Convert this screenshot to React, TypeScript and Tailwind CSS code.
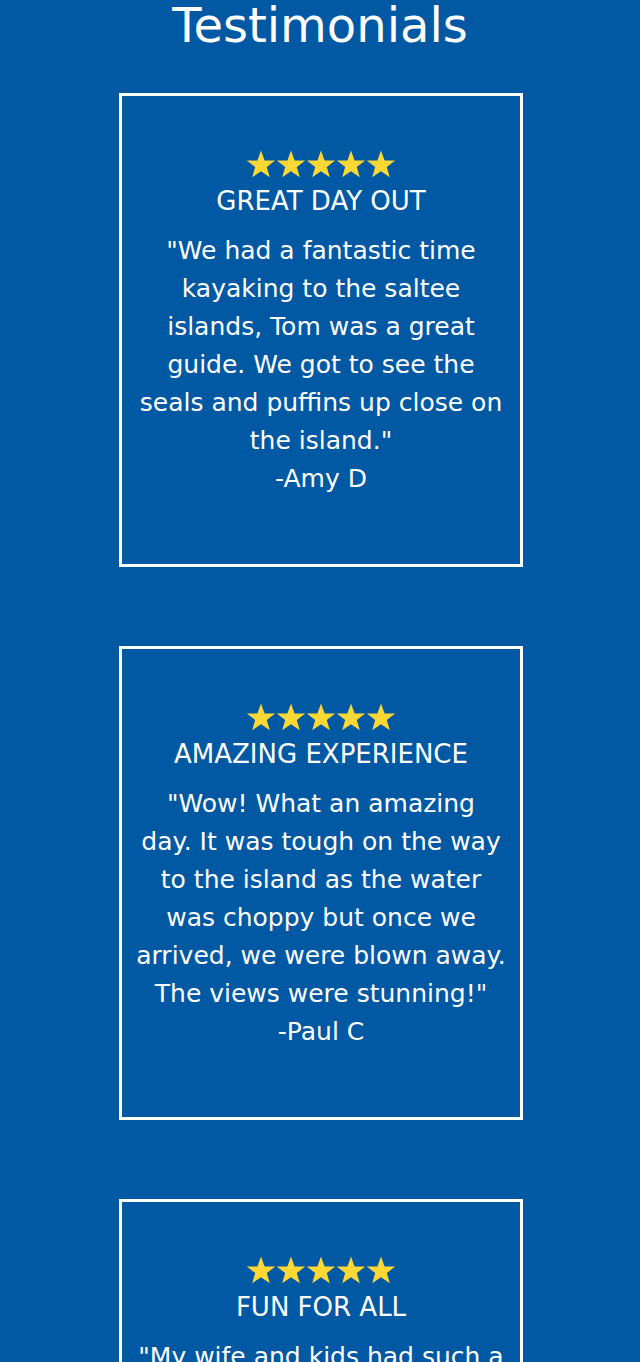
import React from "react";

const Star = () => (
  <svg width="30" height="28" viewBox="0 0 30 28" className="block">
    <polygon
      points="15,0.5 18.6,10.4 29.2,10.6 20.8,17.1 23.8,27.3 15,21.3 6.2,27.3 9.2,17.1 0.8,10.6 11.4,10.4"
      fill="#fdd835"
    />
  </svg>
);

type T = { title: string; lines: string[]; name: string };

const data: T[] = [
  {
    title: "GREAT DAY OUT",
    lines: [
      '"We had a fantastic time',
      "kayaking to the saltee",
      "islands, Tom was a great",
      "guide. We got to see the",
      "seals and puffins up close on",
      'the island."',
    ],
    name: "-Amy D",
  },
  {
    title: "AMAZING EXPERIENCE",
    lines: [
      '"Wow! What an amazing',
      "day. It was tough on the way",
      "to the island as the water",
      "was choppy but once we",
      "arrived, we were blown away.",
      'The views were stunning!"',
    ],
    name: "-Paul C",
  },
  {
    title: "FUN FOR ALL",
    lines: [
      '"My wife and kids had such a',
      "great time on the water. Tom",
      "made everyone feel safe and",
      "the wildlife was incredible.",
      "We will definitely be back",
      'next summer!"',
    ],
    name: "-John M",
  },
];

function Card({ t }: { t: T }) {
  return (
    <div className="w-[404px] h-[474px] border-[3px] border-white mx-auto pt-[54px] px-[6px] flex flex-col items-center text-white">
      <div className="flex">
        <Star />
        <Star />
        <Star />
        <Star />
        <Star />
      </div>
      <div className="mt-[7px] text-[26px] leading-[32px] whitespace-nowrap">{t.title}</div>
      <div className="mt-[15px] text-[25px] leading-[38px] text-center">
        {t.lines.map((l, i) => (
          <div key={i} className="whitespace-nowrap">{l}</div>
        ))}
        <div className="whitespace-nowrap">{t.name}</div>
      </div>
    </div>
  );
}

export default function App() {
  return (
    <div
      className="w-[640px] min-h-[1362px] bg-[#0158a3] overflow-hidden"
      style={{ fontFamily: '"DejaVu Sans", sans-serif' }}
    >
      <h1 className="text-white text-center text-[48px] leading-[50px]">Testimonials</h1>
      <div className="mt-[43px] pl-[2px] flex flex-col gap-[79px]">
        {data.map((t, i) => (
          <Card key={i} t={t} />
        ))}
      </div>
    </div>
  );
}
